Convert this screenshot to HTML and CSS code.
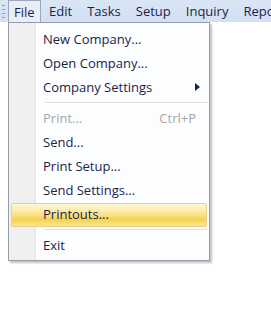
FILE: index.html
```html
<!DOCTYPE html>
<html lang="en">
<head>
    <meta charset="UTF-8">
    <title>File Menu</title>
    <link rel="stylesheet" href="styles.css">
</head>
<body>
    <div class="menubar">
        <div class="grip"></div>
        <div class="menu-item open">File</div>
        <div class="menu-item">Edit</div>
        <div class="menu-item">Tasks</div>
        <div class="menu-item">Setup</div>
        <div class="menu-item">Inquiry</div>
        <div class="menu-item">Repo</div>
    </div>

    <!-- File dropdown -->
    <div class="dropdown">
        <div class="entry">New Company...</div>
        <div class="entry">Open Company...</div>
        <div class="entry submenu">Company Settings<span class="arrow"></span></div>
        <div class="separator"></div>
        <div class="entry disabled">Print...<span class="shortcut">Ctrl+P</span></div>
        <div class="entry">Send...</div>
        <div class="entry">Print Setup...</div>
        <div class="entry">Send Settings...</div>
        <div class="entry hover">Printouts...</div>
        <div class="separator"></div>
        <div class="entry">Exit</div>
    </div>
</body>
</html>
```
FILE: styles.css
```css
body {
    margin: 0;
    background: white;
    font-family: 'Open Sans', 'Noto Sans', sans-serif;
    font-size: 13px;
    color: #1b1f4a;
    width: 271px;
    height: 325px;
    overflow: hidden;
    position: relative;
}

.menubar {
    display: flex;
    height: 22px;
    background: linear-gradient(#dae6f6, #d2e0f3);
    white-space: nowrap;
    overflow: hidden;
}

.grip {
    flex-shrink: 0;
    width: 3px;
    margin: 5px 3px 0 2px;
    height: 13px;
    background: repeating-linear-gradient(#8aa0c0 0 1px, transparent 1px 4px);
}

.menu-item {
    flex-shrink: 0;
    padding: 0 7.5px;
    line-height: 23px;
    color: #1b1f4a;
}

.open {
    background: #e9eef6;
    border: 1px solid #9aa8bd;
    border-bottom: none;
    line-height: 22px;
    height: 23px;
    padding: 0 5px;
    box-sizing: border-box;
    margin-right: 1px;
}

.dropdown {
    position: absolute;
    left: 8px;
    top: 22px;
    width: 202px;
    box-sizing: border-box;
    padding: 5px 2px 2px 2px;
    border: 1px solid #979da8;
    background: linear-gradient(90deg, #f0f0f0 0 26px, #e2e3e3 26px 27px, #ffffff 27px 28px, #fcfdff 28px);
    box-shadow: 2px 2px 2px rgba(0,0,0,0.25);
}

.entry {
    position: relative;
    height: 24px;
    line-height: 20px;
    padding-left: 31px;
    border: 1px solid transparent;
    box-sizing: border-box;
    border-radius: 2px;
}

.disabled {
    color: #a6a6a6;
}

.shortcut {
    position: absolute;
    right: 10px;
}

.arrow {
    position: absolute;
    right: 6px;
    top: 6px;
    border-left: 5px solid #1b1f4a;
    border-top: 4px solid transparent;
    border-bottom: 4px solid transparent;
}

.hover {
    border-color: #e6d08a;
    background: linear-gradient(#fef8d8 0%, #fbe592 45%, #f7d24f 70%, #fbe594 100%);
}

.separator {
    height: 1px;
    margin: 2px 0 3px 33px;
    background: #e0e0e0;
    border-bottom: 1px solid #ffffff;
}
```
